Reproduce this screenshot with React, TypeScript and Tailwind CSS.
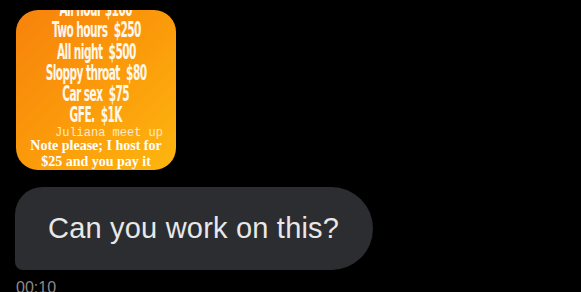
import React from "react";

const prices = [
  "All hour $100",
  "Two hours  $250",
  "All night  $500",
  "Sloppy throat  $80",
  "Car sex  $75",
  "GFE.  $1K",
];

function PriceTile() {
  return (
    <div className="ml-4 mt-[10px] w-[160px] h-[160px] rounded-[22px] overflow-hidden bg-gradient-to-br from-[#f7820c] via-[#fb9a0a] to-[#fdb60f] flex flex-col items-center">
      <div className="-mt-[11px] flex flex-col items-center">
        {prices.map((p) => (
          <div
            key={p}
            className="h-[21.3px] leading-[21px] text-[21px] font-bold text-[#fff7ec] font-['DejaVu_Sans_Condensed','Liberation_Sans_Narrow',sans-serif] tracking-[-1px] whitespace-pre scale-x-[0.56]"
          >
            {p}
          </div>
        ))}
      </div>
      <div className="-mt-[1px] text-[12px] leading-[14px] text-[#fde9c8] font-['Liberation_Mono',monospace] pl-[26px] whitespace-nowrap">
        Juliana meet up
      </div>
      <div className="-mt-[2px] text-[14px] leading-[16px] font-bold text-white font-['Liberation_Serif',serif] text-center whitespace-nowrap">
        Note please; I host for
        <br />
        $25 and you pay it
      </div>
    </div>
  );
}

export default function App() {
  return (
    <div className="w-[581px] h-[292px] bg-black overflow-hidden font-['Liberation_Sans',Arial,sans-serif]">
      <PriceTile />
      <div className="ml-[15px] mt-[17px] w-[358px] h-[83px] bg-[#2c2d30] rounded-tl-[28px] rounded-bl-[8px] rounded-r-[42px] flex items-center pl-[33px]">
        <span className="text-[29px] text-[#e8e8e8] tracking-[0.2px]">Can you work on this?</span>
      </div>
      <div className="ml-[16px] mt-[6px] text-[16px] text-[#8a8a8a]">00:10</div>
    </div>
  );
}
